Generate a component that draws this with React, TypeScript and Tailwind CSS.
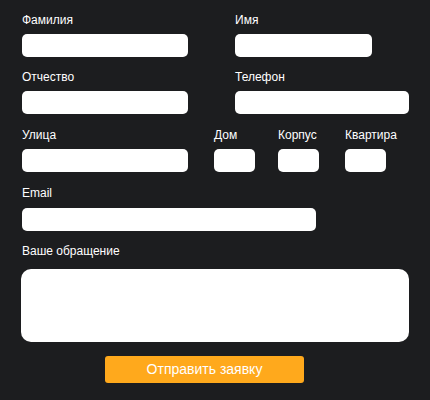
import React from "react";

const Field = ({ label, width, className = "" }: { label: string; width: string; className?: string }) => (
  <div className={`flex flex-col ${className}`}>
    <label className="text-[12px] leading-[14px] text-white">{label}</label>
    <input type="text" className={`${width} h-[23px] mt-[7px] bg-white rounded-[5px] outline-none`} />
  </div>
);

const App = () => {
  return (
    <div
      className="bg-[#1c1d1f] w-[430px] h-[400px] pl-[22px] pt-[13px]"
      style={{ fontFamily: '"Liberation Sans", Arial, sans-serif' }}
    >
      <div className="flex">
        <Field label="Фамилия" width="w-[166px]" />
        <Field label="Имя" width="w-[137px]" className="ml-[47px]" />
      </div>

      <div className="flex mt-[13px]">
        <Field label="Отчество" width="w-[166px]" />
        <Field label="Телефон" width="w-[174px]" className="ml-[47px]" />
      </div>

      <div className="flex mt-[14px]">
        <Field label="Улица" width="w-[166px]" />
        <Field label="Дом" width="w-[41px]" className="ml-[26px]" />
        <Field label="Корпус" width="w-[41px]" className="ml-[23px]" />
        <Field label="Квартира" width="w-[41px]" className="ml-[26px]" />
      </div>

      <div className="mt-[14px]">
        <label className="block text-[12px] leading-[14px] text-white">Email</label>
        <input type="text" className="block w-[294px] h-[23px] mt-[8px] bg-white rounded-[5px] outline-none" />
      </div>

      <div className="mt-[13px]">
        <label className="block text-[12px] leading-[14px] text-white">Ваше обращение</label>
        <textarea className="block w-[388px] h-[73px] mt-[11px] -ml-[1px] bg-white rounded-[10px] outline-none resize-none" />
      </div>

      <div className="mt-[14px] pl-[83px]">
        <button className="w-[199px] h-[27px] bg-[#ffa91c] rounded-[3px] text-white text-[14px] leading-[27px]">
          Отправить заявку
        </button>
      </div>
    </div>
  );
};

export default App;
